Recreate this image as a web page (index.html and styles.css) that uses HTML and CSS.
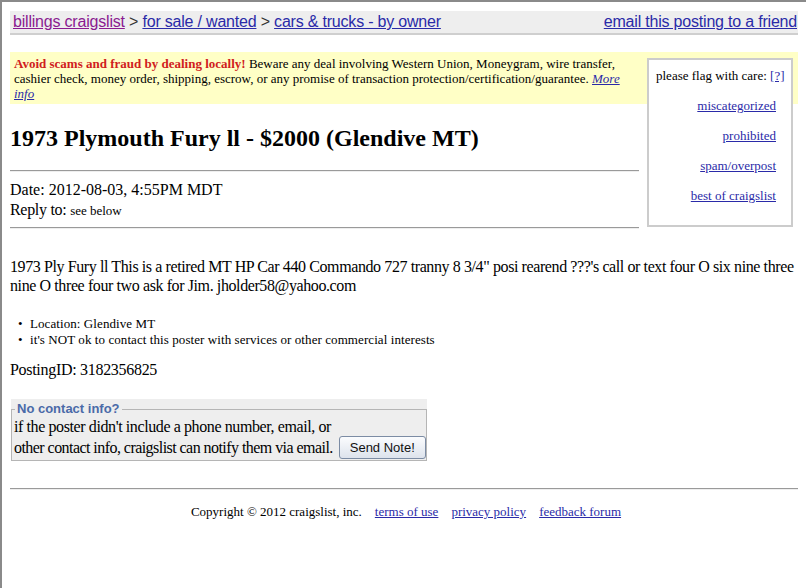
FILE: index.html
```html
<!DOCTYPE html>
<html>
<head>
<meta charset="utf-8">
<title>1973 Plymouth Fury ll - $2000 (Glendive MT)</title>
<link rel="stylesheet" href="styles.css">
</head>
<body>
<div class="page">
  <div class="bchead">
    <div class="crumbs">
      <a class="visited" href="#">billings craigslist</a> &gt;
      <a href="#">for sale / wanted</a> &gt;
      <a href="#">cars &amp; trucks - by owner</a>
    </div>
    <a href="#">email this posting to a friend</a>
  </div>

  <div class="warning">
    <div class="flags">
      <div class="flag-title">please flag with care: <a href="#">[?]</a></div>
      <div class="flag-links">
        <a href="#">miscategorized</a>
        <a href="#">prohibited</a>
        <a href="#">spam/overpost</a>
        <a href="#">best of craigslist</a>
      </div>
    </div>
    <span class="avoid">Avoid scams and fraud by dealing locally!</span> Beware any deal involving Western Union, Moneygram, wire transfer, cashier check, money order, shipping, escrow, or any promise of transaction protection/certification/guarantee. <a class="more" href="#">More info</a>
  </div>

  <h2 class="title">1973 Plymouth Fury ll - $2000 (Glendive MT)</h2>
  <hr class="rule">
  <div class="meta">
    <div>Date: 2012-08-03, 4:55PM MDT</div>
    <div class="reply">Reply to: <small class="below">see below</small></div>
  </div>
  <hr class="rule rule-low">

  <div class="userbody">1973 Ply Fury ll This is a retired MT HP Car 440 Commando 727 tranny 8 3/4" posi rearend ???'s call or text four O six nine three nine O three four two ask for Jim. jholder58@yahoo.com</div>

  <ul class="notes">
    <li>Location: Glendive MT</li>
    <li>it's NOT ok to contact this poster with services or other commercial interests</li>
  </ul>

  <div class="postingid">PostingID: 3182356825</div>

  <div class="contact-box">
    <fieldset class="contact">
      <legend>No contact info?</legend>
      <div class="contact-line">if the poster didn't include a phone number, email, or</div>
      <div class="contact-row"><span>other contact info, craigslist can notify them via email.</span><button class="send" type="button">Send Note!</button></div>
    </fieldset>
  </div>

  <hr class="footrule">
  <div class="footer">
    <span>Copyright &copy; 2012 craigslist, inc.</span>
    <a href="#">terms of use</a>
    <a href="#">privacy policy</a>
    <a href="#">feedback forum</a>
  </div>
</div>
</body>
</html>
```

FILE: styles.css
```css
html, body {
  margin: 0;
  padding: 0;
  background: #fff;
}
body {
  font-family: "Liberation Serif", "Times New Roman", serif;
  font-size: 16px;
  color: #000;
}
a {
  color: #2a2aa8;
}
a.visited {
  color: #8a1a90;
}
.page {
  box-sizing: border-box;
  height: 588px;
  border-top: 2px solid #8a8a8a;
  border-left: 2px solid #8a8a8a;
  padding: 9px 8px 0 8px;
}
.bchead {
  display: flex;
  justify-content: space-between;
  align-items: center;
  height: 22px;
  background: #eeeeee;
  border-bottom: 2px solid #cfcfcf;
  padding: 0 1px 0 3px;
  font-family: "Liberation Sans", Arial, sans-serif;
  font-size: 16px;
  letter-spacing: -0.2px;
  color: #333;
}
.warning {
  margin-top: 17px;
  background: #ffffc6;
  padding: 4px 4px 3px 4px;
  font-size: 13px;
  line-height: 15px;
}
.avoid {
  color: #d02020;
  font-weight: bold;
}
.more {
  font-style: italic;
}
.flags {
  float: right;
  width: 128px;
  margin: 2px 1px 4px 8px;
  background: #fff;
  border: 2px solid #cccccc;
  padding: 8px 7px 22px 7px;
  font-size: 13px;
  line-height: 15px;
}
.flag-title {
  white-space: nowrap;
}
.flag-links {
  display: flex;
  flex-direction: column;
  align-items: flex-end;
  margin-right: 8px;
}
.flag-links a {
  margin-top: 15px;
}
.title {
  font-size: 24px;
  font-weight: bold;
  margin: 20px 0 0 0;
  line-height: 28px;
}
.rule {
  overflow: hidden;
  border: 0;
  border-top: 1px solid #9a9a9a;
  border-bottom: 1px solid #eeeeee;
  height: 0;
  margin: 18px 0 8px 0;
}
.rule-low {
  margin-top: 6px;
}
.meta {
  line-height: 20px;
}
.reply {
  letter-spacing: -0.3px;
}
.below {
  font-size: 13px;
  letter-spacing: 0;
}
.userbody {
  margin-top: 28px;
  line-height: 19px;
  letter-spacing: -0.4px;
  clear: both;
}
.notes {
  margin: 21px 0 0 0;
  padding-left: 20px;
  font-size: 13px;
  line-height: 16px;
  letter-spacing: 0.08px;
}
.notes li {
  list-style: none;
  position: relative;
}
.notes li::before {
  content: "\2022";
  position: absolute;
  left: -12px;
}
.postingid {
  margin-top: 12px;
  line-height: 19px;
  letter-spacing: -0.3px;
}
.contact-box {
  margin: 20px 0 0 1px;
  padding-top: 3px;
  width: 416px;
  background: #eeeeee;
}
.contact {
  box-sizing: border-box;
  width: 416px;
  min-width: 0;
  margin: 0;
  padding: 0 1px 2px 2px;
  border: 1px solid #b5b5b5;
  line-height: 21px;
  letter-spacing: -0.4px;
}
.contact legend {
  font-family: "Liberation Sans", Arial, sans-serif;
  font-size: 13px;
  font-weight: bold;
  letter-spacing: 0;
  color: #4a6aa8;
  padding: 0 2px;
  margin-left: 1px;
  line-height: 14px;
}
.contact-row {
  display: flex;
  align-items: center;
  gap: 6px;
  height: 21px;
  white-space: nowrap;
  letter-spacing: -0.55px;
}
.send {
  flex-shrink: 0;
  font-family: "Liberation Sans", Arial, sans-serif;
  font-size: 13px;
  letter-spacing: 0;
  width: 87px;
  height: 23px;
  padding: 0;
  border: 1px solid #7c8ca4;
  border-radius: 3px;
  background: linear-gradient(#fbfcfe, #dde3ec);
  color: #111;
}
.footrule {
  border: 0;
  border-top: 1px solid #9a9a9a;
  border-bottom: 1px solid #eeeeee;
  height: 0;
  margin: 27px 0 0 0;
}
.footer {
  display: flex;
  justify-content: center;
  gap: 13px;
  margin-top: 14px;
  font-size: 13px;
  line-height: 16px;
  padding-left: 4px;
}
```
